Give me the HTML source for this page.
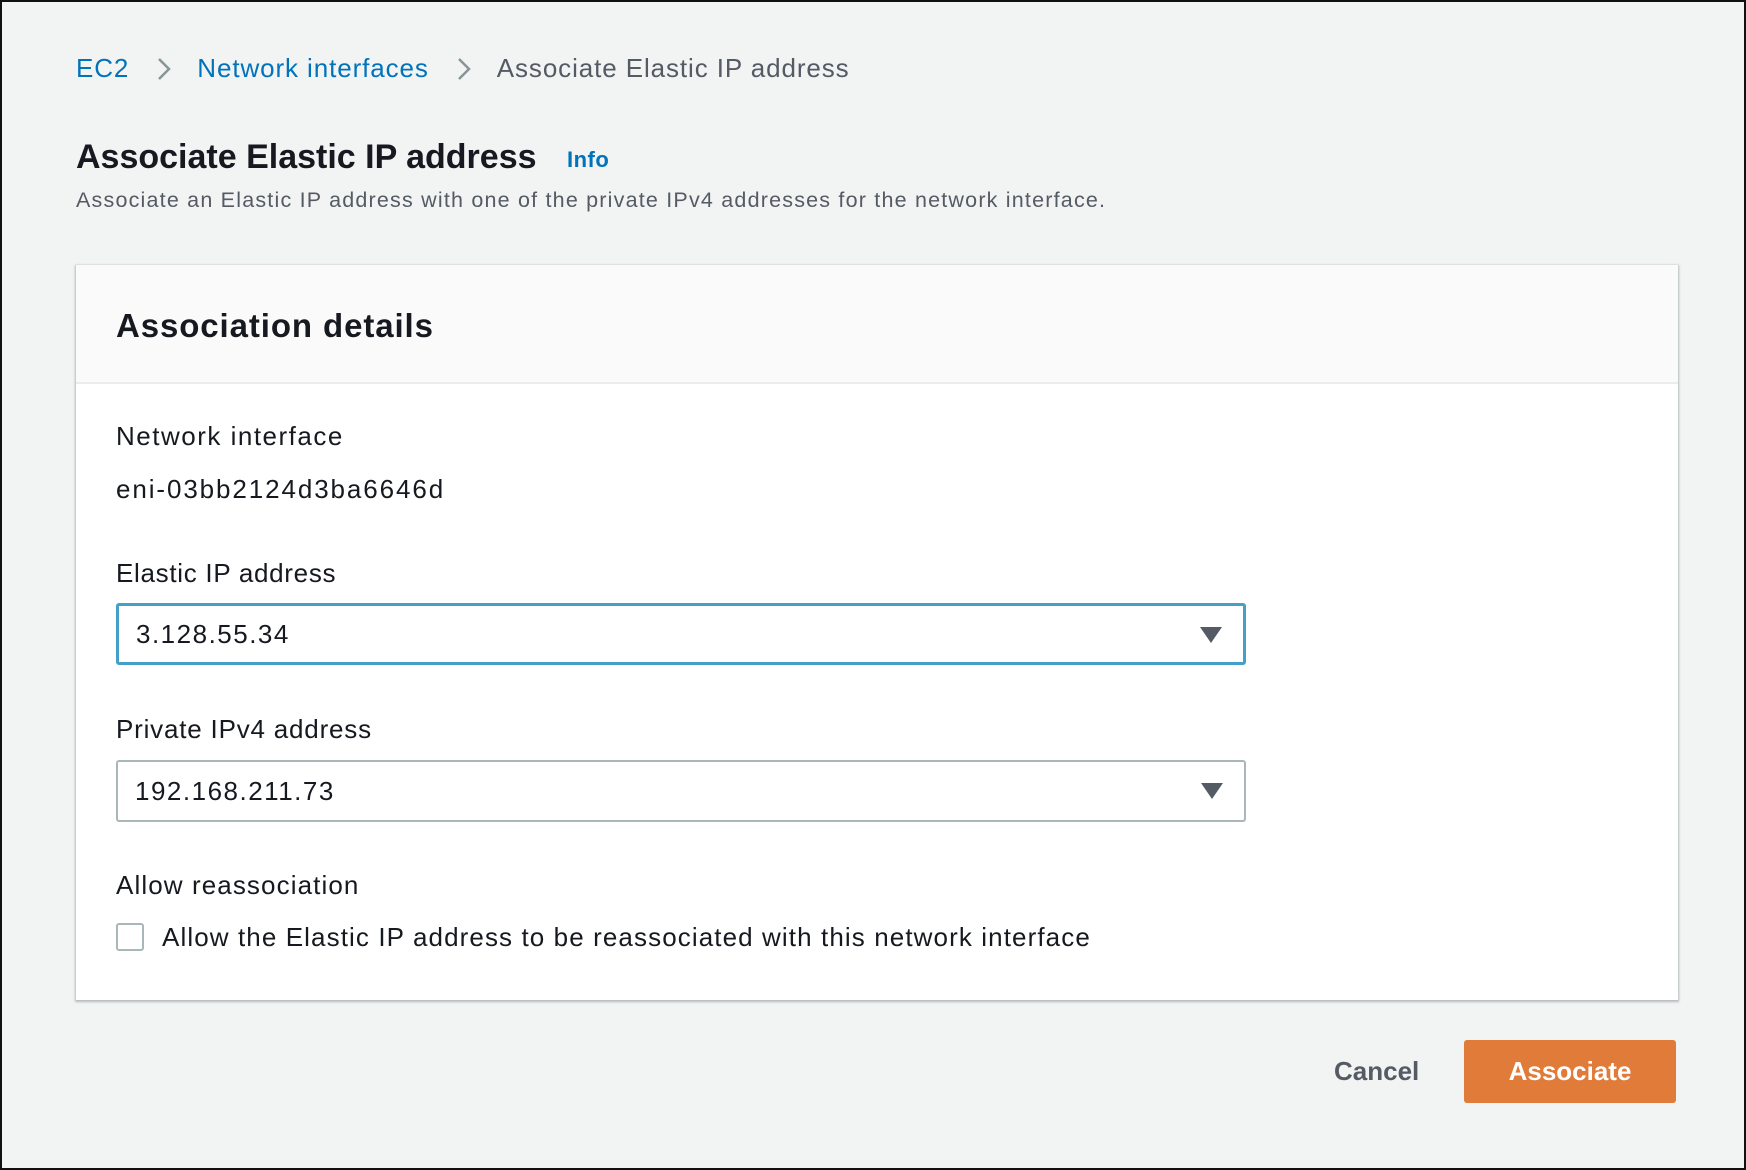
<!DOCTYPE html>
<html><head><meta charset="utf-8"><style>
*{margin:0;padding:0;box-sizing:border-box}
html,body{width:1746px;height:1170px;overflow:hidden}
body{background:#f2f3f3;font-family:"Liberation Sans",sans-serif;color:#16191f;position:relative;border:2px solid #111}
.a{position:absolute;white-space:nowrap}
.bc{top:49px;left:74px;font-size:26px;line-height:34px;letter-spacing:0.9px}
.bc span.l{color:#0073bb}
.bc span.s{color:#545b64}
.bc svg{vertical-align:-4px;margin:0 26px 0 28px}
.card{position:absolute;left:74px;top:263px;width:1602px;height:735px;background:#fff;box-shadow:0 1px 2px 1px rgba(0,28,36,.25)}
.hd{height:119px;background:#fafafa;border-bottom:2px solid #eaeded}
.f{font-size:26px;letter-spacing:1.2px}
.sel{position:absolute;left:40px;width:1130px;height:62px;border:2px solid #aab7b8;border-radius:3px;font-size:26px;letter-spacing:1.5px;padding:0 17px;line-height:58px}
.sel svg{position:absolute;right:20px;top:20px}
</style></head><body>
<div class="a bc"><span class="l">EC2</span><svg width="14" height="24" viewBox="0 0 14 24"><path d="M2 2l10 10L2 22" fill="none" stroke="#879596" stroke-width="2.5"/></svg><span class="l">Network interfaces</span><svg width="14" height="24" viewBox="0 0 14 24"><path d="M2 2l10 10L2 22" fill="none" stroke="#879596" stroke-width="2.5"/></svg><span class="s">Associate Elastic IP address</span></div>
<div class="a" style="top:134px;left:74px;font-size:34px;font-weight:bold;line-height:42px;letter-spacing:0px">Associate Elastic IP address</div>
<div class="a" style="top:145px;left:565px;font-size:22px;font-weight:bold;color:#0073bb;letter-spacing:0.5px">Info</div>
<div class="a" style="top:186px;left:74px;font-size:21.5px;color:#545b64;letter-spacing:1.2px">Associate an Elastic IP address with one of the private IPv4 addresses for the network interface.</div>
<div class="card">
<div class="hd"></div>
<div class="a" style="top:40px;left:40px;font-size:33px;font-weight:bold;line-height:42px;letter-spacing:0.9px">Association details</div>
<div class="a f" style="top:156px;left:40px;letter-spacing:1.5px">Network interface</div>
<div class="a f" style="top:209px;left:40px;letter-spacing:1.9px">eni-03bb2124d3ba6646d</div>
<div class="a f" style="top:293px;left:40px;letter-spacing:0.7px">Elastic IP address</div>
<div class="sel" style="top:338px;border:3px solid #44a0c8;line-height:56px">3.128.55.34<svg width="24" height="18" viewBox="0 0 24 18"><path d="M1 1h22L12 17z" fill="#545b64"/></svg></div>
<div class="a f" style="top:449px;left:40px;letter-spacing:0.8px">Private IPv4 address</div>
<div class="sel" style="top:495px">192.168.211.73<svg width="24" height="18" viewBox="0 0 24 18"><path d="M1 1h22L12 17z" fill="#545b64"/></svg></div>
<div class="a f" style="top:605px;left:40px;letter-spacing:1.1px">Allow reassociation</div>
<div class="a" style="top:658px;left:40px;width:28px;height:28px;border:2px solid #aab7b8;border-radius:3px"></div>
<div class="a f" style="top:657px;left:86px;letter-spacing:1.1px">Allow the Elastic IP address to be reassociated with this network interface</div>
</div>
<div class="a" style="top:1054px;left:1332px;font-size:26px;font-weight:bold;color:#545b64">Cancel</div>
<div class="a" style="top:1038px;left:1462px;width:212px;height:63px;background:#e07b39;border-radius:3px;color:#fff;font-size:26px;font-weight:bold;text-align:center;line-height:63px">Associate</div>
</body></html>
